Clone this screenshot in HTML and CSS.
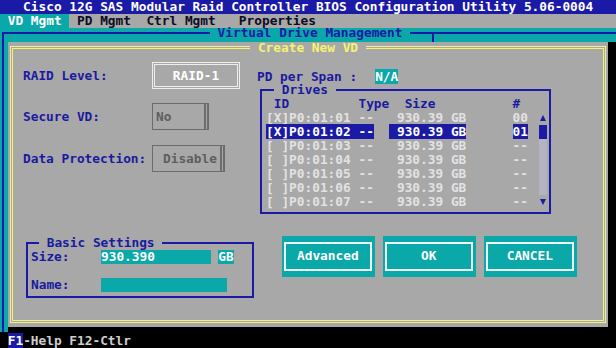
FILE: index.html
```html
<!DOCTYPE html>
<html lang="en">

<head>
    <meta charset="UTF-8">
    <meta name="viewport" content="width=device-width, initial-scale=1.0">
    <title>Cisco 12G SAS Modular Raid Controller BIOS Configuration Utility</title>
    <link rel="stylesheet" href="styles.css">
</head>

<body>
    <header class="title-bar">Cisco 12G SAS Modular Raid Controller BIOS Configuration Utility 5.06-0004</header>
    <nav class="tabs">
        <span class="tab active">VD Mgmt</span>
        <span class="tab">PD Mgmt</span>
        <span class="tab">Ctrl Mgmt</span>
        <span class="tab props">Properties</span>
    </nav>
    <main class="workspace">
        <fieldset class="vdm">
            <legend>Virtual Drive Management</legend>
            <div class="dialog-wrap">
                <section class="dialog">
                    <fieldset class="dialog-frame">
                        <legend>Create New VD</legend>

                        <div class="top-row">
                            <div class="options">
                                <div class="field">
                                    <span class="label">RAID Level:</span>
                                    <span class="box box-raid">RAID-1</span>
                                </div>
                                <div class="field">
                                    <span class="label">Secure VD:</span>
                                    <span class="box box-off box-no">No</span>
                                </div>
                                <div class="field">
                                    <span class="label">Data Protection:</span>
                                    <span class="box box-off box-disable">Disable</span>
                                </div>
                            </div>

                            <div class="drives-col">
                                <div class="span-row">PD per Span :<span class="value">N/A</span></div>
                                <fieldset class="drives">
                                    <legend>Drives</legend>
                                    <div class="drive-head"> ID         Type  Size          #</div>
                                    <div class="drive-body">
                                        <ul class="drive-list">
                                            <li>[X]P0:01:01 --   930.39 GB      00</li>
                                            <li><span class="sel">[X]P0:01:02 --</span>  <span class="sel"> 930.39 GB</span>      <span class="sel">01</span></li>
                                            <li>[ ]P0:01:03 --   930.39 GB      --</li>
                                            <li>[ ]P0:01:04 --   930.39 GB      --</li>
                                            <li>[ ]P0:01:05 --   930.39 GB      --</li>
                                            <li>[ ]P0:01:06 --   930.39 GB      --</li>
                                            <li>[ ]P0:01:07 --   930.39 GB      --</li>
                                        </ul>
                                        <div class="scrollbar">
                                            <span class="sb-arrow"><svg width="8" height="8" viewBox="0 0 8 8"><polygon points="4,1 7,7 1,7" /></svg></span>
                                            <span class="sb-thumb"></span>
                                            <span class="sb-track"></span>
                                            <span class="sb-arrow"><svg width="8" height="8" viewBox="0 0 8 8"><polygon points="1,1 7,1 4,7" /></svg></span>
                                        </div>
                                    </div>
                                </fieldset>
                            </div>
                        </div>

                        <div class="bottom-row">
                            <fieldset class="basic">
                                <legend>Basic Settings</legend>
                                <div class="bs-row">
                                    <span class="bs-label">Size:</span>
                                    <span class="input input-size">930.390</span>
                                    <span class="unit">GB</span>
                                </div>
                                <div class="bs-row"></div>
                                <div class="bs-row">
                                    <span class="bs-label">Name:</span>
                                    <span class="input input-name"></span>
                                </div>
                            </fieldset>

                            <div class="actions">
                                <button class="btn"><span>Advanced</span></button>
                                <button class="btn"><span>OK</span></button>
                                <button class="btn"><span>CANCEL</span></button>
                            </div>
                        </div>
                    </fieldset>
                </section>
            </div>
        </fieldset>
    </main>
    <footer class="status-bar"><span class="key">F1</span>-Help F12-Ctlr</footer>
</body>

</html>
```

FILE: styles.css
```css
* {
    box-sizing: border-box;
}

body {
    margin: 0;
    width: 616px;
    height: 348px;
    overflow: hidden;
    background-color: #000;
    font-family: "DejaVu Sans Mono", "Liberation Mono", monospace;
    font-size: 12.8px;
    font-weight: bold;
    line-height: 13.92px;
    color: #e2e2e2;
}

fieldset {
    margin: 0;
    padding: 0;
    min-width: 0;
}

legend {
    padding: 0 1ch;
}

/* top bars */

.title-bar {
    height: 14px;
    line-height: 14px;
    padding-left: 3ch;
    background-color: #1a1aa6;
    color: #fff;
    white-space: pre;
}

.tabs {
    display: flex;
    height: 14px;
    line-height: 14px;
    background-color: #a8a8a8;
    color: #0c0c24;
}

.tab {
    padding: 0 1ch;
}

.tab.active {
    background-color: #0aa8a8;
    color: #fff;
}

.tab.props {
    margin-left: 1ch;
}

/* virtual drive management frame */

.workspace {
    height: 304px;
    background-color: #0aa8a8;
}

.vdm {
    height: 100%;
    margin-left: 2px;
    padding-top: 3.8px;
    border: none;
    border-top: 2px solid #1a1aa6;
    border-left: 2px solid #1a1aa6;
}

.vdm > legend {
    margin: 0 auto;
    line-height: 10px;
    color: #1a1aa6;
}

/* black strip right of and under the dialog */
.dialog-wrap {
    margin-left: 3.7px;
    padding-bottom: 5px;
    background-color: #000;
}

.dialog {
    position: relative;
    width: 600.3px;
    height: 285px;
    padding: 1px 2px 4px 2.3px;
    background-color: #a8a8a8;
}

.dialog::before {
    content: "";
    position: absolute;
    left: 424px;
    top: -8px;
    width: 2px;
    height: 8px;
    background-color: #1a1aa6;
}

.dialog-frame {
    height: 100%;
    border: 3px double #f2f27c;
}

.dialog-frame > legend {
    margin: 0 auto;
    line-height: 10px;
    color: #f4f46c;
}

/* options + drives */

.top-row {
    display: flex;
    align-items: flex-start;
    padding-left: 10px;
}

.options {
    width: 234px;
    padding-top: 9.2px;
}

.field {
    display: flex;
    align-items: center;
    height: 27px;
    margin-bottom: 14.5px;
}

.label {
    width: 129px;
    color: #1a1aa0;
}

.box {
    height: 27px;
    display: flex;
    align-items: center;
}

.box-raid {
    width: 88px;
    justify-content: center;
    border: 3px double #eeeeee;
    color: #fff;
}

.box-off {
    border: 1px solid #6c6c6c;
    border-right: 5px double #6c6c6c;
    color: #5e5e5e;
}

.box-no {
    width: 57px;
    padding-left: 3px;
}

.box-disable {
    width: 73px;
    padding-left: 10px;
}

.drives-col {
    width: 294px;
    padding-top: 16.8px;
}

.span-row {
    height: 13.92px;
    color: #1a1aa0;
    white-space: pre;
}

.value {
    margin-left: 18px;
    background-color: #0aa8a8;
    color: #fff;
}

.drives {
    width: 291px;
    margin-left: 3px;
    padding: 1.9px 0 3.2px;
    border: 2px solid #1a1aa6;
}

.drives > legend {
    margin-left: 12px;
    line-height: 12px;
    color: #1a1aa0;
}

.drive-head {
    padding-left: 4px;
    height: 13.92px;
    color: #1a1aa0;
    white-space: pre;
}

.drive-body {
    display: flex;
}

.drive-list {
    flex: 1;
    list-style: none;
    margin: 0;
    padding: 0 0 0 4px;
}

.drive-list li {
    height: 13.92px;
    white-space: pre;
}

.sel {
    background-color: #1a1aa6;
    color: #fff;
}

.scrollbar {
    display: flex;
    flex-direction: column;
    width: 8px;
    margin-right: 2.3px;
}

.sb-arrow {
    height: 13.92px;
    display: flex;
    align-items: center;
    justify-content: center;
}

.sb-arrow svg {
    fill: #1a1aa6;
}

.sb-thumb {
    height: 13.92px;
    background-color: #1a1aa6;
}

.sb-track {
    height: 55.68px;
    background-color: #b4b4c0;
}

/* basic settings + buttons */

.bottom-row {
    display: flex;
    align-items: flex-start;
    margin-top: 22px;
    padding-left: 13px;
}

.basic {
    width: 228px;
    padding: 0 0 4px 3px;
    border: 2px solid #1a1aa6;
}

.basic > legend {
    margin-left: 8px;
    line-height: 14px;
    color: #1a1aa0;
}

.bs-row {
    display: flex;
    height: 13.92px;
}

.bs-label {
    width: 70px;
    color: #1a1aa0;
}

.input {
    background-color: #0aa8a8;
    color: #fff;
}

.input-size {
    width: 110px;
}

.input-name {
    width: 126px;
}

.unit {
    margin-left: 7px;
    width: 16px;
    text-align: center;
    background-color: #0aa8a8;
    color: #fff;
}

.actions {
    display: flex;
    gap: 8px;
    margin-left: 27.7px;
}

.btn {
    width: 93px;
    height: 41.3px;
    padding: 6px 3px 6.6px 2.3px;
    border: none;
    background-color: #0aa8a8;
    font: inherit;
}

.btn span {
    display: flex;
    align-items: center;
    justify-content: center;
    height: 100%;
    border: 2px solid #eefcfc;
    color: #fff;
}

/* status line */

.status-bar {
    height: 16px;
    padding: 2px 0 0 1ch;
    line-height: 13px;
    color: #cfcfcf;
    white-space: pre;
}

.key {
    background-color: #1a1aa6;
    color: #fff;
}
```
